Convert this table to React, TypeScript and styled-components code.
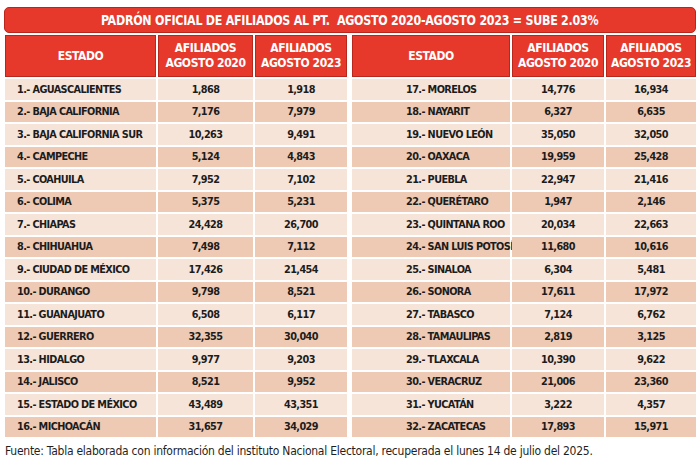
import React from "react";
import styled, { createGlobalStyle } from "styled-components";

const Global = createGlobalStyle`
  html, body { margin: 0; padding: 0; background: #ffffff; }
  body { width: 700px; height: 462px; overflow: hidden; }
`;

const COND = `"DejaVu Sans", sans-serif`;

const Page = styled.div`
  box-sizing: border-box;
  width: 700px;
  height: 462px;
  padding: 7px 4px 0 4px;
  display: flex;
  flex-direction: column;
  font-family: ${COND};
  font-stretch: condensed;
`;

const TitleBar = styled.div`
  box-sizing: border-box;
  height: 26px;
  background: #e6392c;
  border: 1px solid #b8261c;
  border-radius: 5px;
  color: #ffffff;
  display: flex;
  align-items: center;
  justify-content: center;
`;

const TitleText = styled.span`
  display: inline-block;
  font-weight: 700;
  font-size: 14.5px;
  letter-spacing: -0.3px;
  white-space: pre;
  transform: scaleX(0.85);
`;

const Tables = styled.div`
  margin-top: 2px;
  display: flex;
  gap: 5px;
  padding-left: 1px;
`;

const Table = styled.div<{ $cols: string }>`
  display: grid;
  grid-template-columns: ${(p) => p.$cols};
  grid-template-rows: 42px repeat(16, 20.5px);
  column-gap: 2px;
  row-gap: 2px;
`;

const HeadCell = styled.div`
  box-sizing: border-box;
  background: #e6392c;
  border: 1px solid #b8261c;
  color: #ffffff;
  font-weight: 700;
  font-size: 12px;
  line-height: 15px;
  letter-spacing: -0.4px;
  text-align: center;
  display: flex;
  align-items: center;
  justify-content: center;
`;

const Cell = styled.div<{ $dark: boolean; $pad?: number }>`
  background: ${(p) => (p.$dark ? "#eecab4" : "#f6e4d9")};
  color: #1c1c1c;
  font-weight: 700;
  font-size: 10.8px;
  letter-spacing: -0.6px;
  display: flex;
  align-items: center;
  white-space: nowrap;
  justify-content: ${(p) => (p.$pad !== undefined ? "flex-start" : "center")};
  padding-left: ${(p) => (p.$pad !== undefined ? `${p.$pad}px` : "0")};
`;

const Footer = styled.div`
  margin-top: 7px;
  padding-left: 1px;
  font-size: 12px;
  letter-spacing: -0.25px;
  color: #1f1f1f;
  white-space: nowrap;
`;

type Row = [string, string, string];

const left: Row[] = [
  ["1.- AGUASCALIENTES", "1,868", "1,918"],
  ["2.- BAJA CALIFORNIA", "7,176", "7,979"],
  ["3.- BAJA CALIFORNIA SUR", "10,263", "9,491"],
  ["4.- CAMPECHE", "5,124", "4,843"],
  ["5.- COAHUILA", "7,952", "7,102"],
  ["6.- COLIMA", "5,375", "5,231"],
  ["7.- CHIAPAS", "24,428", "26,700"],
  ["8.- CHIHUAHUA", "7,498", "7,112"],
  ["9.- CIUDAD DE MÉXICO", "17,426", "21,454"],
  ["10.- DURANGO", "9,798", "8,521"],
  ["11.- GUANAJUATO", "6,508", "6,117"],
  ["12.- GUERRERO", "32,355", "30,040"],
  ["13.- HIDALGO", "9,977", "9,203"],
  ["14.- JALISCO", "8,521", "9,952"],
  ["15.- ESTADO DE MÉXICO", "43,489", "43,351"],
  ["16.- MICHOACÁN", "31,657", "34,029"],
];

const right: Row[] = [
  ["17.- MORELOS", "14,776", "16,934"],
  ["18.- NAYARIT", "6,327", "6,635"],
  ["19.- NUEVO LEÓN", "35,050", "32,050"],
  ["20.- OAXACA", "19,959", "25,428"],
  ["21.- PUEBLA", "22,947", "21,416"],
  ["22.- QUERÉTARO", "1,947", "2,146"],
  ["23.- QUINTANA ROO", "20,034", "22,663"],
  ["24.- SAN LUIS POTOSÍ", "11,680", "10,616"],
  ["25.- SINALOA", "6,304", "5,481"],
  ["26.- SONORA", "17,611", "17,972"],
  ["27.- TABASCO", "7,124", "6,762"],
  ["28.- TAMAULIPAS", "2,819", "3,125"],
  ["29.- TLAXCALA", "10,390", "9,622"],
  ["30.- VERACRUZ", "21,006", "23,360"],
  ["31.- YUCATÁN", "3,222", "4,357"],
  ["32.- ZACATECAS", "17,893", "15,971"],
];

function DataTable({ rows, cols, pad }: { rows: Row[]; cols: string; pad: number }) {
  return (
    <Table $cols={cols}>
      <HeadCell>ESTADO</HeadCell>
      <HeadCell>
        AFILIADOS
        <br />
        AGOSTO 2020
      </HeadCell>
      <HeadCell>
        AFILIADOS
        <br />
        AGOSTO 2023
      </HeadCell>
      {rows.map((r, i) => (
        <React.Fragment key={r[0]}>
          <Cell $dark={i % 2 === 1} $pad={pad}>{r[0]}</Cell>
          <Cell $dark={i % 2 === 1}>{r[1]}</Cell>
          <Cell $dark={i % 2 === 1}>{r[2]}</Cell>
        </React.Fragment>
      ))}
    </Table>
  );
}

export default function App() {
  return (
    <>
      <Global />
      <Page>
        <TitleBar>
          <TitleText>{"PADRÓN OFICIAL DE AFILIADOS AL PT.  AGOSTO 2020-AGOSTO 2023 = SUBE 2.03%"}</TitleText>
        </TitleBar>
        <Tables>
          <DataTable rows={left} cols="151px 95px 92px" pad={12} />
          <DataTable rows={right} cols="158px 92px 90px" pad={54} />
        </Tables>
        <Footer>
          Fuente: Tabla elaborada con información del instituto Nacional Electoral, recuperada el lunes 14 de julio del 2025.
        </Footer>
      </Page>
    </>
  );
}
